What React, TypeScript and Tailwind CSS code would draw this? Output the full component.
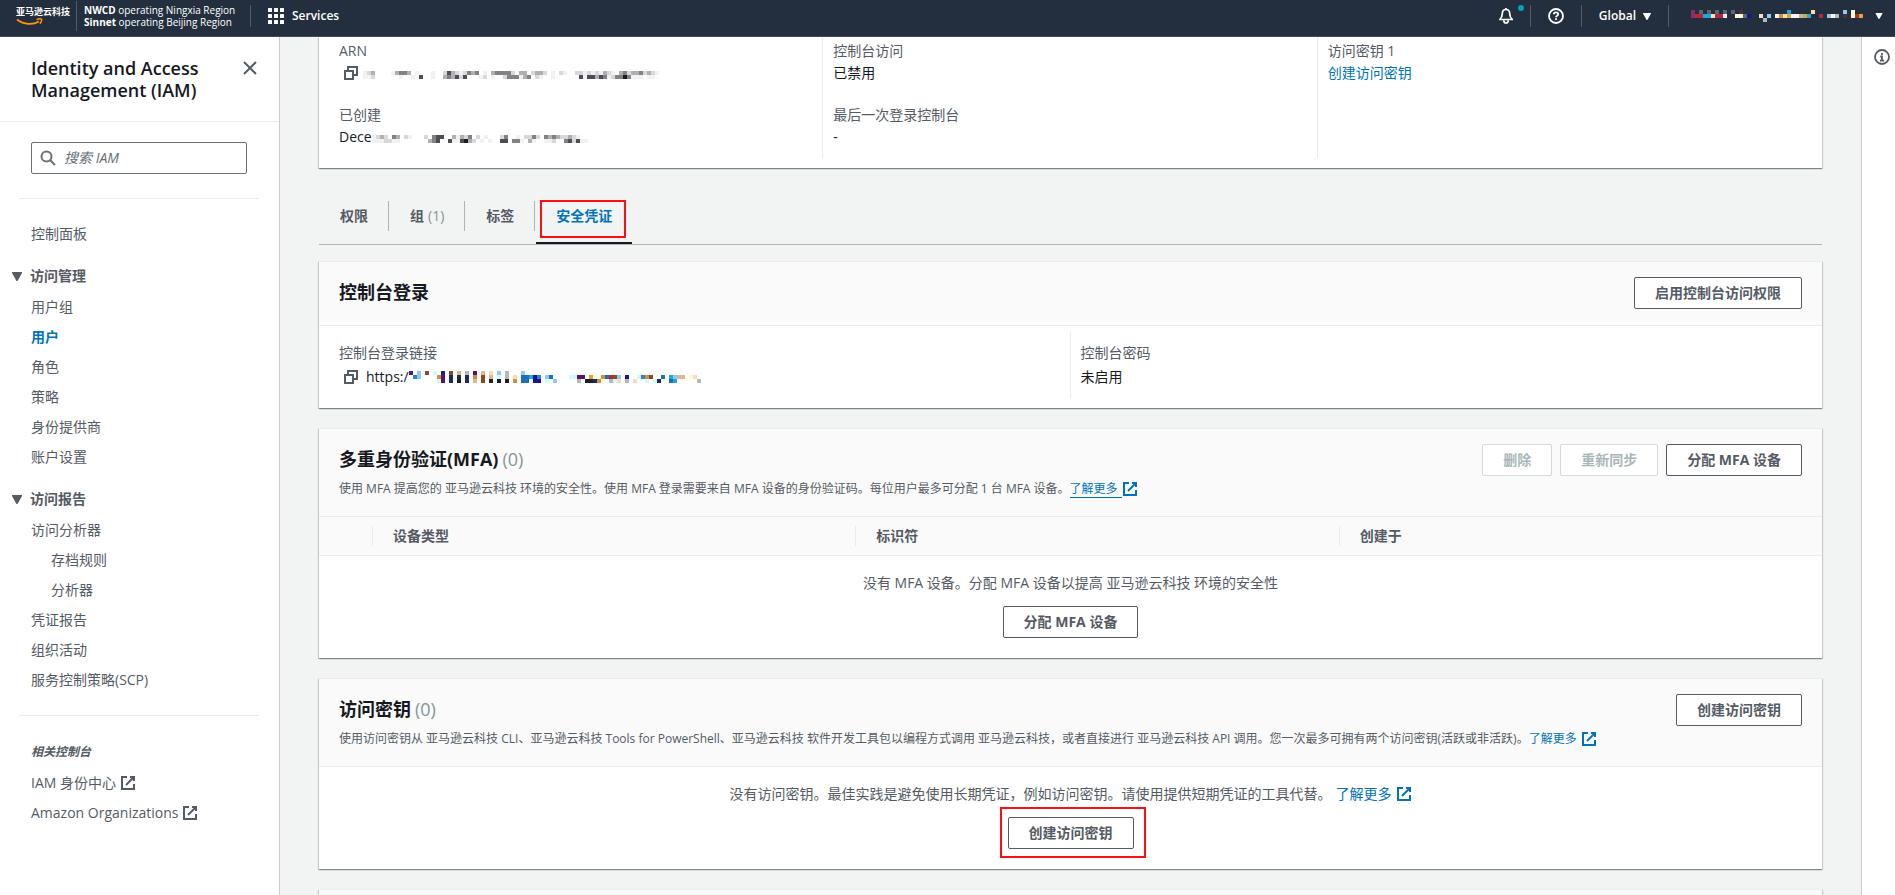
import React from 'react'
import clsx from 'clsx'

type IconProps = { className?: string }

function ExternalIcon({ className }: IconProps) {
  return (
    <svg viewBox="0 0 16 16" className={clsx('h-4 w-4 shrink-0', className)} fill="none" stroke="currentColor" strokeWidth="2">
      <path d="M10 2h4v4" />
      <path d="M6 10l8-8" />
      <path d="M14 9v5H2V2h5" />
    </svg>
  )
}

function CopyIcon({ className }: IconProps) {
  return (
    <svg viewBox="0 0 16 16" className={clsx('h-4 w-4 shrink-0', className)} fill="none" stroke="currentColor" strokeWidth="2">
      <path d="M2 6h8v8H2z" />
      <path d="M5 5V2h9v8h-3" />
    </svg>
  )
}

function Caret({ className }: IconProps) {
  return (
    <svg viewBox="0 0 10 9" className={clsx('shrink-0', className)} fill="currentColor">
      <path d="M0 0h10v1L5.5 9h-1L0 1z" />
    </svg>
  )
}

const PALETTE: Record<string, string> = {
  '1': '#f1f1f1',
  '2': '#d8d8da',
  '3': '#b0b0b3',
  '4': '#828286',
  '5': '#4d4d53',
  '6': '#1b1b22',
  w: '#f4f4f6',
  g: '#b4b8bd',
  s: '#5c6672',
  d: '#4a3038',
  k: '#1c1f24',
  n: '#1b2b63',
  N: '#1414a0',
  b: '#2f80cf',
  B: '#1b6fc0',
  c: '#1ea7dc',
  l: '#8ccbf8',
  e: '#c9fbff',
  m: '#5f1060',
  u: '#45208a',
  r: '#b02a3c',
  v: '#8a2f5e',
  o: '#cf8f3f',
  t: '#deb88a',
  p: '#fbdcb4',
  x: '#8a4a22',
  y: '#d9a82c',
  f: '#fbfbd0',
}

// Redacted values are shown as 4px blocks
function Mosaic({ rows, className }: { rows: string[]; className?: string }) {
  const cols = Math.max(...rows.map((r) => r.length))
  return (
    <svg width={cols * 4} height={rows.length * 4} className={clsx('shrink-0', className)} shapeRendering="crispEdges" aria-hidden="true">
      {rows.map((row, y) =>
        row
          .split('')
          .map((ch, x) => (ch === '.' ? null : <rect key={`${x}-${y}`} x={x * 4} y={y * 4} width="4" height="4" fill={PALETTE[ch]} />)),
      )}
    </svg>
  )
}

const ARN_ROWS = [
  '..........................................................................',
  '123....13443.1...1..253212434.1.344442.33.2332.1.21..2212121321.3423342321',
  '112......1..1.5..1..343525...12.1..2444134.21..1......5155354124464111.11.',
]

const CREATED_ROWS = [
  '......................................................',
  '1232.43.21...2.455..31324.2.1...24..1.2242.434322321..',
  '1112211.......345..5115632.1.1..55.441.31..112..452511',
]

const LINK_ROWS = [
  'u.l.x.e.n.x.t.g.m.t.p.l.g...l.............................................',
  '.bl....om.n.n.n.o.x.t.e.g.p.BBcNb.lB....eemm.yf.oBrxl.N..ebox..B.cltt.fp..',
  '.......em.n.k.n.t.x.k.k.k.o.BB.NN.e.l.....g.kknof.gep.g.p..e.en..Bc.....g.',
]

const ACCOUNT_ROWS = [
  'v.s.s.s.s.s.d...........c.....p.......l.f.',
  'vrrccprrw..ffsN..p.l.wopywwgyc..r.lwg.d.fry',
  '..................g.......................',
]

const card =
  'border-t border-[#eaeded] bg-white shadow-[0_1px_1px_0_rgba(0,28,36,0.3),1px_1px_1px_0_rgba(0,28,36,0.15),-1px_1px_1px_0_rgba(0,28,36,0.15)]'

function Button({ children, disabled }: { children: React.ReactNode; disabled?: boolean }) {
  return (
    <button
      type="button"
      disabled={disabled}
      className="h-8 whitespace-nowrap rounded-[2px] border border-[#545b64] bg-white px-5 text-sm font-bold text-[#545b64] disabled:border-[#d5dbdb] disabled:text-[#aab7b8]"
    >
      {children}
    </button>
  )
}

function LearnMore({ underlined, className }: { underlined?: boolean; className?: string }) {
  return (
    <a href="#learn-more" className={clsx('inline-flex items-center text-[#0073bb]', className)}>
      <span className={clsx('pr-1', underlined && 'border-b border-[#0073bb]')}>了解更多</span>
      <ExternalIcon />
    </a>
  )
}

function CardHeader({
  title,
  count,
  description,
  actions,
}: {
  title: string
  count?: number
  description?: React.ReactNode
  actions: React.ReactNode
}) {
  return (
    <div className="flex items-start justify-between border-b border-[#eaeded] bg-[#fafafa] px-5 pb-4 pt-[15px]">
      <div className="pt-1">
        <h2 className="text-lg/[22px] font-bold text-[#16191f]">
          {title}
          {count !== undefined && <span className="ml-1 font-normal text-[#879596]">({count})</span>}
        </h2>
        {description && <p className="mt-2 flex h-[22px] items-center text-xs text-[#545b64]">{description}</p>}
      </div>
      <div className="flex h-8 gap-2">{actions}</div>
    </div>
  )
}

function Field({ label, children }: { label: string; children: React.ReactNode }) {
  return (
    <div>
      <div className="text-[#545b64]">{label}</div>
      <div className="flex h-[22px] items-center text-[#16191f]">{children}</div>
    </div>
  )
}

function TopBar() {
  return (
    <header className="flex h-[37px] shrink-0 items-center border-b border-[#414d5c] bg-[#232f3e] pb-1 text-white">
      <a href="#home" className="ml-4 flex flex-col">
        <span className="text-[9px]/[12px] font-bold">亚马逊云科技</span>
        <svg viewBox="0 0 27 8" className="h-2 w-[27px]" fill="none" stroke="#ff9900">
          <path d="M1 1.5c7 5.5 16 5.5 22 2" strokeWidth="1.8" />
          <path d="M20.500 1.600c2.500-.9 4.500-.9 5-.4.4.7-.2 2.800-1.500 4.500" strokeWidth="1.400" />
        </svg>
      </a>
      <div className="ml-[6px] h-[30px] w-px bg-[#545b64]" />
      <div className="ml-[7px] w-[166px] whitespace-nowrap text-[10px]/[12px]">
        <div>
          <b>NWCD</b> operating Ningxia Region
        </div>
        <div>
          <b>Sinnet</b> operating Beijing Region
        </div>
      </div>
      <div className="h-[22px] w-px bg-[#545b64]" />
      <button type="button" className="ml-[17px] flex items-center gap-2 text-xs font-semibold">
        <svg viewBox="0 0 16 16" className="h-4 w-4" fill="currentColor">
          {[0, 6, 12].map((y) => [0, 6, 12].map((x) => <rect key={`${x}-${y}`} x={x} y={y} width="4" height="4" rx="0.5" />))}
        </svg>
        Services
      </button>

      <div className="ml-auto flex items-center">
        <button type="button" aria-label="Notifications" className="relative mr-4">
          <svg viewBox="0 0 16 16" className="h-4 w-4" fill="none" stroke="currentColor" strokeWidth="1.700">
            <path d="M8 1.500c-2.600 0-3.700 2-3.700 4.200 0 2.600-1 4.300-2.600 5.800h12.600c-1.600-1.500-2.600-3.200-2.600-5.800 0-2.200-1.100-4.200-3.700-4.200z" strokeLinejoin="round" />
            <path d="M5.800 12.200c0 3.700 4.400 3.700 4.400 0" />
            <path d="M8 0v2" />
          </svg>
          <span className="absolute -right-[10px] -top-[3px] h-[6px] w-[6px] rounded-full bg-[#00a1c9]" />
        </button>
        <div className="h-[22px] w-px bg-[#545b64]" />
        <button type="button" aria-label="Help" className="mx-[17px]">
          <svg viewBox="0 0 16 16" className="h-4 w-4" fill="none" stroke="currentColor" strokeWidth="1.800">
            <circle cx="8" cy="8" r="7" />
            <path d="M5.800 6.300c0-1.300 1-2 2.200-2s2.200.7 2.200 1.900c0 1.500-2.200 1.500-2.200 3.100" />
            <path d="M8 10.300v1.700" />
          </svg>
        </button>
        <div className="h-[22px] w-px bg-[#545b64]" />
        <button type="button" className="mx-[17px] flex items-center gap-[7px] text-xs font-semibold">
          Global
          <Caret className="h-[7px] w-2" />
        </button>
        <div className="h-[22px] w-px bg-[#545b64]" />
        <button type="button" aria-label="Account" className="ml-[22px] mr-3 flex items-center gap-3">
          <Mosaic rows={ACCOUNT_ROWS} />
          <Caret className="h-[6px] w-2" />
        </button>
      </div>
    </header>
  )
}

type NavItem = { label: string; active?: boolean; nested?: boolean }

const ACCESS_ITEMS: NavItem[] = [
  { label: '用户组' },
  { label: '用户', active: true },
  { label: '角色' },
  { label: '策略' },
  { label: '身份提供商' },
  { label: '账户设置' },
]

const REPORT_ITEMS: NavItem[] = [
  { label: '访问分析器' },
  { label: '存档规则', nested: true },
  { label: '分析器', nested: true },
  { label: '凭证报告' },
  { label: '组织活动' },
  { label: '服务控制策略(SCP)' },
]

function NavSection({ title, items }: { title: string; items: NavItem[] }) {
  return (
    <section className="mt-5">
      <button type="button" className="flex items-center pl-3 font-bold">
        <Caret className="mr-2 h-[9px] w-[10px]" />
        {title}
      </button>
      <ul className="mt-[9px] space-y-2 pl-[31px]">
        {items.map((item) => (
          <li key={item.label} className={clsx(item.nested && 'pl-5')}>
            <a href="#nav" className={clsx(item.active && 'font-bold text-[#0073bb]')}>
              {item.label}
            </a>
          </li>
        ))}
      </ul>
    </section>
  )
}

function Sidebar() {
  return (
    <aside className="w-[280px] shrink-0 border-r border-[#ccc] bg-white text-[#545b64]">
      <div className="flex items-start justify-between border-b border-[#eaeded] py-5 pl-[31px] pr-[21px]">
        <h1 className="w-[180px] text-lg/[22px] font-semibold text-[#16191f]">Identity and Access Management (IAM)</h1>
        <button type="button" aria-label="Close" className="mt-[3px]">
          <svg viewBox="0 0 16 16" className="h-4 w-4" fill="none" stroke="currentColor" strokeWidth="2">
            <path d="M2 2l12 12M14 2L2 14" />
          </svg>
        </button>
      </div>
      <label className="ml-[31px] mr-8 mt-5 flex h-8 items-center gap-2 rounded-[2px] border border-[#687078] px-2">
        <svg viewBox="0 0 16 16" className="h-4 w-4 shrink-0 text-[#687078]" fill="none" stroke="currentColor" strokeWidth="2">
          <circle cx="6.500" cy="6.500" r="5" />
          <path d="M10 10l5 5" />
        </svg>
        <input
          type="search"
          aria-label="搜索 IAM"
          placeholder="搜索 IAM"
          className="w-full min-w-0 outline-none placeholder:italic placeholder:text-[#687078]"
        />
      </label>
      <hr className="ml-[19px] mr-5 mt-6 border-[#eaeded]" />
      <nav className="mt-6">
        <a href="#dashboard" className="block pl-[31px]">
          控制面板
        </a>
        <NavSection title="访问管理" items={ACCESS_ITEMS} />
        <NavSection title="访问报告" items={REPORT_ITEMS} />
      </nav>
      <hr className="ml-[19px] mr-5 mt-6 border-[#eaeded]" />
      <div className="mt-[25px] pl-[31px]">
        <h3 className="text-xs/[22px] font-bold italic">相关控制台</h3>
        <ul className="mt-[9px] space-y-2">
          <li>
            <a href="#identity-center" className="flex items-center gap-1">
              IAM 身份中心 <ExternalIcon />
            </a>
          </li>
          <li>
            <a href="#organizations" className="flex items-center gap-1">
              Amazon Organizations <ExternalIcon />
            </a>
          </li>
        </ul>
      </div>
    </aside>
  )
}

const TABS = [{ label: '权限' }, { label: '组', count: 1 }, { label: '标签' }, { label: '安全凭证', active: true }]

function Tabs() {
  return (
    <div role="tablist" className="mt-[30px] flex h-[47px] border-b border-[#aab7b8] pl-px">
      {TABS.map((tab) => (
        <button
          key={tab.label}
          type="button"
          role="tab"
          aria-selected={!!tab.active}
          className={clsx(
            'relative flex items-start pt-[3px] font-bold',
            tab.active ? 'border-b-2 border-[#16191f] text-[#0073bb]' : 'mr-px text-[#545b64]',
          )}
        >
          <span className={clsx('flex h-[30px] items-center px-5', !tab.active && 'border-r border-[#aab7b8]')}>
            {tab.label}
            {tab.count && <span className="ml-1 font-normal text-[#879596]">({tab.count})</span>}
          </span>
          {tab.active && <span className="absolute bottom-1 left-1 right-[6px] top-[2px] border-2 border-[#fb0f0f]" />}
        </button>
      ))}
    </div>
  )
}

function UserSummary() {
  return (
    <section className="bg-white px-[10px] pb-[10px] shadow-[0_1px_1px_0_rgba(0,28,36,0.3),1px_1px_1px_0_rgba(0,28,36,0.15),-1px_1px_1px_0_rgba(0,28,36,0.15)]">
      <div className="grid grid-cols-3">
        <div className="space-y-5 px-[10px] pb-[10px] pt-[3px]">
          <Field label="ARN">
            <CopyIcon className="ml-1 mr-1 text-[#545b64]" />
            <Mosaic rows={ARN_ROWS} />
          </Field>
          <Field label="已创建">
            Dece
            <Mosaic rows={CREATED_ROWS} />
          </Field>
        </div>
        <div className="-ml-px space-y-5 border-l border-[#eaeded] px-[10px] pb-[10px] pt-[3px]">
          <Field label="控制台访问">已禁用</Field>
          <Field label="最后一次登录控制台">-</Field>
        </div>
        <div className="-ml-px border-l border-[#eaeded] px-[10px] pb-[10px] pt-[3px]">
          <Field label="访问密钥 1">
            <a href="#create-key" className="text-[#0073bb]">
              创建访问密钥
            </a>
          </Field>
        </div>
      </div>
    </section>
  )
}

function ConsoleSignIn() {
  return (
    <section className={clsx(card, 'mt-4')}>
      <CardHeader title="控制台登录" actions={<Button>启用控制台访问权限</Button>} />
      <div className="grid grid-cols-2 px-[10px] pb-[10px] pt-[6px]">
        <div className="px-[10px] py-[10px]">
          <div className="mb-[2px] text-[#545b64]">控制台登录链接</div>
          <div className="flex h-[22px] items-center text-[#16191f]">
            <CopyIcon className="ml-1 mr-[7px] text-[#545b64]" />
            https:/
            <Mosaic rows={LINK_ROWS} />
          </div>
        </div>
        <div className="-ml-px border-l border-[#eaeded] px-[10px] py-[10px]">
          <div className="mb-[2px] text-[#545b64]">控制台密码</div>
          <div className="text-[#16191f]">未启用</div>
        </div>
      </div>
    </section>
  )
}

function MfaDevices() {
  return (
    <section className={clsx(card, 'mt-5')}>
      <CardHeader
        title="多重身份验证(MFA)"
        count={0}
        description={
          <>
            使用 MFA 提高您的 亚马逊云科技 环境的安全性。使用 MFA 登录需要来自 MFA 设备的身份验证码。每位用户最多可分配 1 台 MFA 设备。
            <LearnMore underlined />
          </>
        }
        actions={
          <>
            <Button disabled>删除</Button>
            <Button disabled>重新同步</Button>
            <Button>分配 MFA 设备</Button>
          </>
        }
      />
      <table className="w-full table-fixed text-left">
        <thead className="border-b border-[#eaeded] bg-[#fafafa] text-[#545b64]">
          <tr>
            <th className="w-[53px]" aria-label="选择" />
            {['设备类型', '标识符', '创建于'].map((name) => (
              <th key={name} className="py-[9px] font-bold">
                <div className="h-5 border-l border-[#eaeded] pl-5 leading-5">{name}</div>
              </th>
            ))}
          </tr>
        </thead>
        <tbody>
          <tr>
            <td colSpan={4} className="pb-5 pt-4 text-center text-[#545b64]">
              <p className="mb-3">没有 MFA 设备。分配 MFA 设备以提高 亚马逊云科技 环境的安全性</p>
              <Button>分配 MFA 设备</Button>
            </td>
          </tr>
        </tbody>
      </table>
    </section>
  )
}

function AccessKeys() {
  return (
    <section className={clsx(card, 'mt-5')}>
      <CardHeader
        title="访问密钥"
        count={0}
        description={
          <>
            使用访问密钥从 亚马逊云科技 CLI、亚马逊云科技 Tools for PowerShell、亚马逊云科技 软件开发工具包以编程方式调用 亚马逊云科技，或者直接进行 亚马逊云科技 API
            调用。您一次最多可拥有两个访问密钥(活跃或非活跃)。
            <LearnMore />
          </>
        }
        actions={<Button>创建访问密钥</Button>}
      />
      <div className="flex flex-col items-center pb-5 pt-4 text-[#545b64]">
        <p className="mb-3 flex items-center">
          没有访问密钥。最佳实践是避免使用长期凭证，例如访问密钥。请使用提供短期凭证的工具代替。
          <LearnMore className="ml-1" />
        </p>
        <div className="relative flex">
          <Button>创建访问密钥</Button>
          <span className="pointer-events-none absolute -bottom-[9px] -left-2 -right-3 -top-[10px] border-2 border-[#fb0f0f]" />
        </div>
      </div>
    </section>
  )
}

export default function App() {
  return (
    <div className="flex h-screen flex-col overflow-hidden font-['Open_Sans','Noto_Sans_CJK_SC',sans-serif] text-sm/[22px]">
      <TopBar />
      <div className="flex min-h-0 flex-1">
        <Sidebar />
        <main className="min-w-0 flex-1 overflow-hidden bg-[#f2f3f3] px-[39px]">
          <UserSummary />
          <Tabs />
          <ConsoleSignIn />
          <MfaDevices />
          <AccessKeys />
          <section className={clsx(card, 'mt-5')}>
            <div className="h-16 bg-[#fafafa]" />
          </section>
        </main>
        <aside className="w-[34px] shrink-0 border-l border-[#ccc] bg-white pl-3 pt-3">
          <button type="button" aria-label="Info" className="block text-[#545b64]">
            <svg viewBox="0 0 16 16" className="h-4 w-4" fill="none" stroke="currentColor" strokeWidth="1.800">
              <circle cx="8" cy="8" r="7" />
              <path d="M8 4v2M6.200 7.400H8v4M6 11.600h4.200" />
            </svg>
          </button>
        </aside>
      </div>
    </div>
  )
}
